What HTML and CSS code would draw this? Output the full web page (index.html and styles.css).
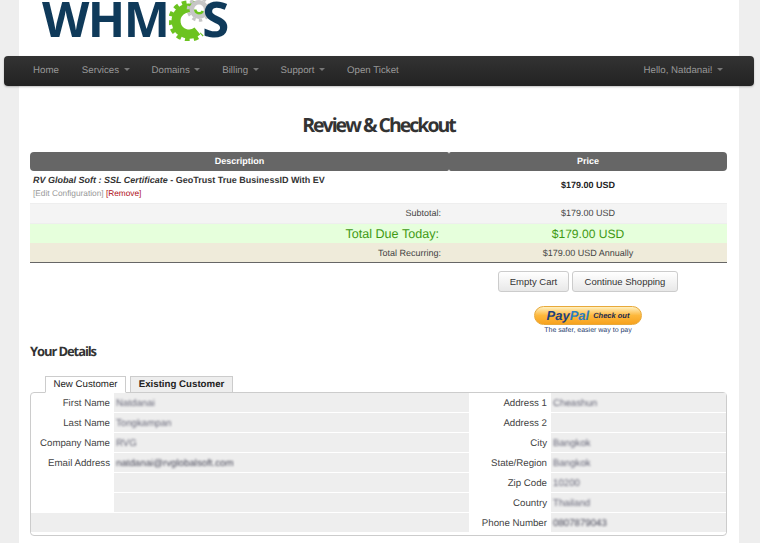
FILE: index.html
```html
<!DOCTYPE html>
<html lang="en">
<head>
<meta charset="utf-8">
<title>Review &amp; Checkout</title>
<link rel="stylesheet" href="styles.css">
</head>
<body>
<div class="page">
  <header class="logo">
    <span class="logo-text">WHM</span>
    <svg class="logo-gears" width="40" height="41" viewBox="0 0 40 41" aria-hidden="true">
      <g fill="none">
        <path d="M24.4 8.8A13 13 0 1 0 28.4 31" stroke="#6cc320" stroke-width="9"/>
        <path d="M26 3.5A18.5 18.5 0 1 0 33 34" stroke="#6cc320" stroke-width="4.5" stroke-dasharray="4.6 4"/>
        <circle cx="30" cy="9.5" r="10.8" stroke="#c6c6c6" stroke-width="3" stroke-dasharray="3.4 3.4"/>
        <circle cx="30" cy="9.5" r="7.2" fill="#fff" stroke="#c6c6c6" stroke-width="4.6"/>
        <path d="M26.2 9.5a4 4 0 0 0 7.6 1.5" stroke="#6cc320" stroke-width="2.6"/>
      </g>
    </svg>
    <span class="logo-text logo-s">S</span>
  </header>

  <nav class="navbar">
    <ul class="nav">
      <li>Home</li>
      <li>Services<i class="caret"></i></li>
      <li>Domains<i class="caret"></i></li>
      <li>Billing<i class="caret"></i></li>
      <li>Support<i class="caret"></i></li>
      <li>Open Ticket</li>
    </ul>
    <div class="nav-user">Hello, Natdanai!<i class="caret"></i></div>
  </nav>

  <h1 class="title">Review &amp; Checkout</h1>

  <table class="cart">
    <thead>
      <tr><th class="th-left">Description</th><th class="th-right">Price</th></tr>
    </thead>
    <tbody>
      <tr class="item">
        <td class="item-desc">
          <div class="item-name"><em>RV Global Soft : SSL Certificate</em> - GeoTrust True BusinessID With EV</div>
          <div class="item-links">[Edit Configuration] <span class="remove">[Remove]</span></div>
        </td>
        <td class="item-price">$179.00 USD</td>
      </tr>
      <tr class="sub">
        <td class="label">Subtotal: &nbsp;</td><td class="value">$179.00 USD</td>
      </tr>
      <tr class="due">
        <td class="label due-label">Total Due Today: &nbsp;</td><td class="value">$179.00 USD</td>
      </tr>
      <tr class="rec">
        <td class="label">Total Recurring: &nbsp;</td><td class="value">$179.00 USD Annually</td>
      </tr>
    </tbody>
  </table>

  <div class="actions">
    <div class="buttons">
      <button class="btn" type="button">Empty Cart</button>
      <button class="btn btn-wide" type="button">Continue Shopping</button>
    </div>
    <div class="paypal">
      <div class="pp-pill"><span class="pp-mark">Pay<span class="pp-pal">Pal</span></span><span class="pp-check">Check out</span></div>
      <div class="pp-tag">The safer, easier way to pay</div>
    </div>
  </div>

  <h2 class="details-title">Your Details</h2>

  <div class="tabs">
    <div class="tab">New Customer</div>
    <div class="tab tab-active">Existing Customer</div>
  </div>

  <div class="details">
    <div class="k">First Name</div><div class="v"><span>Natdanai</span></div><div class="k">Address 1</div><div class="v"><span>Cheashun</span></div>
    <div class="k">Last Name</div><div class="v"><span>Tongkampan</span></div><div class="k">Address 2</div><div class="v"></div>
    <div class="k">Company Name</div><div class="v"><span>RVG</span></div><div class="k">City</div><div class="v"><span>Bangkok</span></div>
    <div class="k">Email Address</div><div class="v"><span class="dark">natdanai@rvglobalsoft.com</span></div><div class="k">State/Region</div><div class="v"><span>Bangkok</span></div>
    <div class="k"></div><div class="v"></div><div class="k">Zip Code</div><div class="v"><span>10200</span></div>
    <div class="k"></div><div class="v"></div><div class="k">Country</div><div class="v"><span>Thailand</span></div>
    <div class="v wide"></div><div class="k">Phone Number</div><div class="v"><span class="dark">0807879043</span></div>
  </div>
</div>
</body>
</html>
```
FILE: styles.css
```css
* { box-sizing: border-box; }
html, body { margin: 0; height: 543px; overflow: hidden; }
body {
  background: #eee;
  font-family: "Liberation Sans", Arial, sans-serif;
  font-size: 9.7px;
  color: #333;
  text-rendering: geometricPrecision;
}
.page {
  width: 720px;
  height: 543px;
  margin-left: 19px;
  padding: 0 12px 0 11px;
  background: #fff;
}

/* logo */
.logo {
  display: flex;
  align-items: flex-start;
  height: 56px;
  padding-left: 12px;
}
.logo-text {
  font-family: "Open Sans", sans-serif;
  font-weight: 700;
  font-size: 49px;
  line-height: 38px;
  color: #0f3a5a;
  letter-spacing: -1.6px;
}
.logo-gears { margin-left: 1px; flex: none; }
.logo-s { margin-left: -7px; }

/* navbar */
.navbar {
  display: flex;
  justify-content: space-between;
  align-items: center;
  height: 30px;
  margin: 0 -27px 0 -26px;
  padding: 0 31px 2px 19px;
  border-radius: 4px;
  background: linear-gradient(#333, #222);
  box-shadow: 0 1px 2px rgba(0, 0, 0, .25);
  color: #999;
}
.nav {
  display: flex;
  gap: 22px;
  margin: 0;
  padding: 0 0 0 10px;
  list-style: none;
}
.nav li:first-child { margin-right: 1px; }
.caret {
  display: inline-block;
  margin-left: 4.5px;
  vertical-align: middle;
  border-top: 3px solid #777;
  border-left: 3px solid transparent;
  border-right: 3px solid transparent;
}

/* title */
.title {
  margin: 26px 0 0;
  font-family: "Open Sans", sans-serif;
  font-size: 19.5px;
  line-height: 26px;
  font-weight: 700;
  letter-spacing: -2px;
  color: #333;
  text-align: center;
}

/* cart */
.cart {
  width: 697px;
  margin-top: 14px;
  border-collapse: separate;
  border-spacing: 0;
  table-layout: fixed;
}
.cart th {
  height: 19px;
  padding: 0 0 1px;
  background: #666;
  color: #fff;
  font-size: 9px;
  font-weight: 700;
}
.cart td { padding: 0; }
.th-left { width: 419px; border-radius: 4px 2px 2px 4px; }
.th-right { border-radius: 2px 4px 4px 2px; }
.item td { height: 33px; border-bottom: 1px solid #eee; }
.item-desc { padding: 0 0 0 3px !important; vertical-align: top; }
.item-name { margin-top: 3px; font-size: 9px; line-height: 12px; font-weight: 700; color: #333; }
.item-links { margin-top: 1px; font-size: 8.3px; line-height: 13px; color: #999; }
.remove { color: #b01020; }
.item-price { padding-bottom: 4px !important; text-align: center; font-size: 9px; font-weight: 700; color: #222; }
.label { padding-right: 3px !important; text-align: right; }
.value { text-align: center; }
.sub td { height: 20px; padding-bottom: 2px; background: #f4f4f4; border-bottom: 1px solid #eee; color: #444; font-size: 9px; }
.due td { height: 19px; background: #e6ffdc; color: #3f9a14; font-size: 12.1px; }
.due .due-label { font-size: 12.6px; }
.rec td { height: 20px; background: #efebda; color: #444; font-size: 9px; border-bottom: 1px solid #666; }

/* actions */
.actions {
  display: flex;
  flex-direction: column;
  align-items: center;
  width: 180px;
  margin: 8px 0 0 468px;
}
.buttons { display: flex; gap: 3px; }
.btn {
  height: 21px;
  width: 71px;
  padding: 0;
  border: 1px solid #ccc;
  border-radius: 3px;
  background: linear-gradient(#fff, #e8e8e8);
  color: #333;
  font-family: inherit;
  font-size: 9.5px;
}
.btn-wide { width: 106px; }
.paypal { margin-top: 14px; width: 108px; }
.pp-pill {
  display: flex;
  align-items: center;
  justify-content: center;
  gap: 4px;
  height: 19px;
  border: 1px solid #e8a93a;
  border-radius: 10px;
  background: linear-gradient(#fff0c0, #fdb83c 50%, #f7a21e);
}
.pp-mark { font-size: 13px; font-weight: 700; font-style: italic; color: #1c3f7c; }
.pp-pal { color: #2a7cc0; }
.pp-check { font-size: 7.5px; font-weight: 700; font-style: italic; color: #1a2a50; }
.pp-tag { margin-top: 1px; font-size: 7px; line-height: 9px; color: #2a3f70; text-align: center; }

/* details */
.details-title {
  margin: 7px 0 0;
  font-family: "Open Sans", sans-serif;
  font-size: 13px;
  line-height: 18px;
  font-weight: 700;
  letter-spacing: -1.1px;
  color: #333;
}
.tabs {
  display: flex;
  gap: 4px;
  margin-top: 16px;
  padding-left: 15px;
}
.tab {
  width: 81px;
  height: 17px;
  margin-bottom: -1px;
  border: 1px solid #ccc;
  border-bottom-color: #fff;
  background: #fff;
  text-align: center;
  line-height: 16px;
  color: #222;
}
.tab-active {
  width: 103px;
  background: #eee;
  border-bottom-color: #ccc;
  font-weight: 700;
}
.details {
  display: grid;
  grid-template-columns: 83px 355px 82px 175px;
  grid-auto-rows: 20px;
  width: 697px;
  height: 144px;
  border: 1px solid #ccc;
  border-radius: 4px;
}
.k {
  padding-right: 4px;
  text-align: right;
  line-height: 22px;
  color: #444;
}
.v {
  padding-left: 2px;
  background: #eee;
  border-bottom: 1px solid #fff;
  line-height: 22px;
}
.v span {
  display: inline-block;
  color: #667;
  filter: blur(.8px);
}
.v .dark { color: #445; }
.wide { grid-column: span 2; }
```
